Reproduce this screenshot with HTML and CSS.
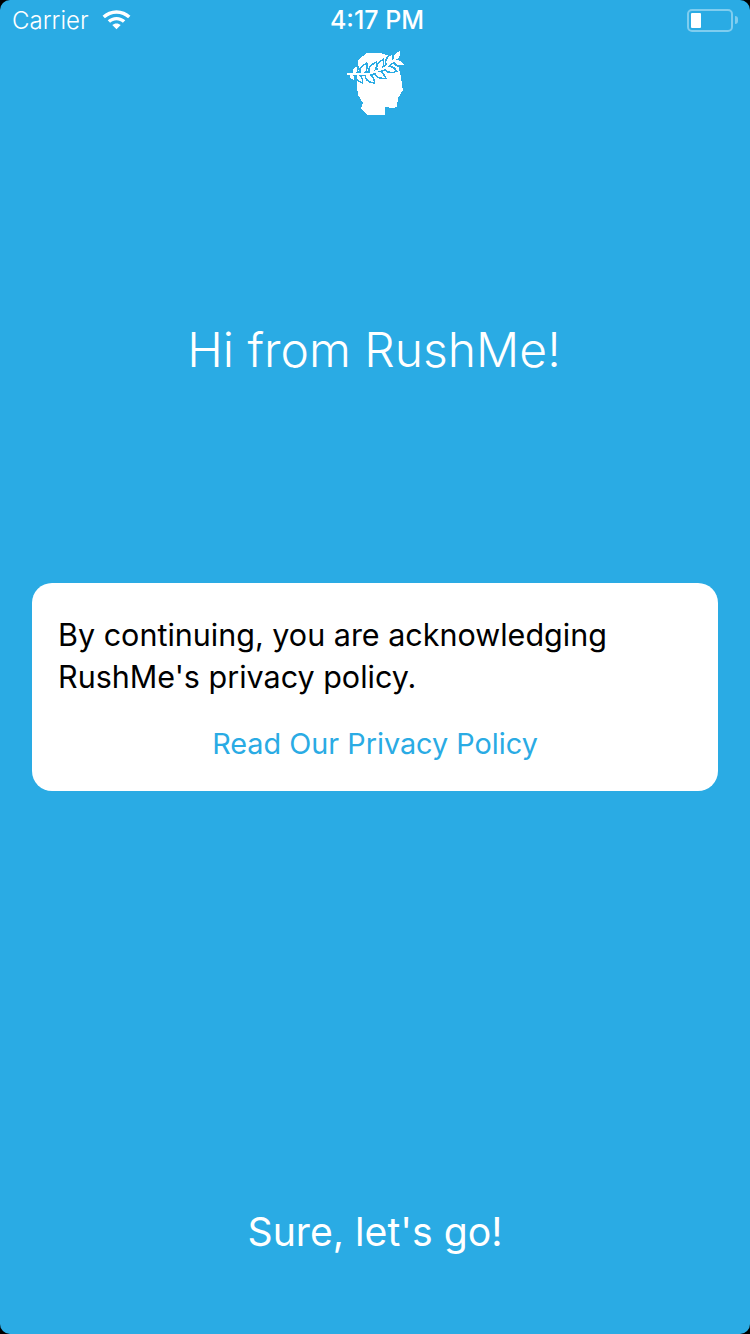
FILE: index.html
```html
<!DOCTYPE html>
<html lang="en">
<head>
  <meta charset="UTF-8" />
  <meta name="viewport" content="width=device-width, initial-scale=1.0" />
  <title>RushMe</title>
  <link rel="stylesheet" href="styles.css">
</head>
<body>
  <div class="status-bar">
    <div class="status-left">
      <span>Carrier</span>
      <svg class="wifi" width="31" height="23" viewBox="0 0 30 22">
        <path d="M15 3C9.600 3 5 5 1.500 8.300l2.300 2.400C6.800 8 10.700 6.300 15 6.300s8.200 1.700 11.200 4.400l2.300-2.400C25 5 20.400 3 15 3z" fill="#fff"/>
        <path d="M15 9.500c-3.300 0-6.200 1.200-8.500 3.300l2.300 2.400c1.700-1.500 3.800-2.400 6.200-2.400s4.500.9 6.200 2.400l2.300-2.400c-2.300-2.100-5.200-3.300-8.500-3.300z" fill="#fff"/>
        <path d="M15 15.800c-1.600 0-3 .6-4.100 1.500L15 21.500l4.100-4.200c-1.100-.9-2.500-1.500-4.100-1.500z" fill="#fff"/>
      </svg>
    </div>
    <div class="status-time">4:17 PM</div>
    <div class="status-right">
      <div class="battery"><div class="battery-level"></div></div>
      <div class="battery-cap"></div>
    </div>
  </div>

  <div class="logo">
    <svg width="64" height="72" viewBox="0 0 64 72" shape-rendering="crispEdges">
      <defs>
        <path id="leaf" d="M0 0C3-3.500 7-3 11 0C7 3 3 3.500 0 0Z"/>
        <g id="laurel">
          <path d="M3 25L26 24.500L40 19L51 10L52 11.500L41 21L26 26.500L3 27Z"/>
          <use href="#leaf" transform="translate(9 26) rotate(-60) scale(.8)"/>
          <use href="#leaf" transform="translate(17 26) rotate(-62)"/>
          <use href="#leaf" transform="translate(26 25) rotate(-60)"/>
          <use href="#leaf" transform="translate(34 22.500) rotate(-65)"/>
          <use href="#leaf" transform="translate(43 17) rotate(-65)"/>
          <use href="#leaf" transform="translate(6 26) rotate(55) scale(.7)"/>
          <use href="#leaf" transform="translate(13 27) rotate(55) scale(.8)"/>
          <use href="#leaf" transform="translate(22 26.500) rotate(45)"/>
          <use href="#leaf" transform="translate(31 24) rotate(30)"/>
          <use href="#leaf" transform="translate(41 20) rotate(15)"/>
          <use href="#leaf" transform="translate(50 13) rotate(20)"/>
          <use href="#leaf" transform="translate(50 12) rotate(-55)"/>
        </g>
      </defs>
      <path class="head" d="M14 12 L23 5 L36 5 L48 9 L54 17 L57 29 L58 37 L59 42 L54 50 L53 59 L48 60 L41 59 L41 67 L23 67 L17 61 L19 55 L14 47 L13 39 Z"/>
      <use href="#laurel" class="laurel-gap"/>
      <use href="#laurel" class="laurel"/>
    </svg>
  </div>

  <h1 class="greeting">Hi from RushMe!</h1>

  <div class="card">
    <p class="card-text">By continuing, you are acknowledging RushMe's privacy policy.</p>
    <a class="card-link" href="#">Read Our Privacy Policy</a>
  </div>

  <button class="go-btn">Sure, let's go!</button>
</body>
</html>
```

FILE: styles.css
```css
*, *::before, *::after { box-sizing: border-box; }

html { background-color: #000; }

body {
  margin: 0;
  height: 1334px;
  overflow: hidden;
  background-color: #2aabe4;
  border-radius: 10px;
  color: #fff;
  font-family: Inter, 'Liberation Sans', sans-serif;
  display: flex;
  flex-direction: column;
  align-items: center;
}

.status-bar {
  width: 100%;
  height: 40px;
  padding: 0 12px;
  display: flex;
  align-items: center;
  justify-content: space-between;
}

.status-left {
  flex: 1;
  display: flex;
  align-items: center;
  gap: 12px;
  font-size: 24px;
  font-weight: 300;
}

.wifi { margin-top: -4px; }

.status-time {
  margin-left: 4px;
  font-size: 25px;
  font-weight: 500;
}

.status-right {
  flex: 1;
  display: flex;
  align-items: center;
  justify-content: flex-end;
}

.battery {
  width: 46px;
  height: 23px;
  border: 2px solid #7fcdef;
  border-radius: 5px;
  padding: 2px;
}

.battery-level {
  width: 10px;
  height: 100%;
  background-color: #fff;
  border-radius: 1px;
}

.battery-cap {
  width: 3px;
  height: 8px;
  margin-left: 2px;
  background-color: #7fcdef;
  border-radius: 0 3px 3px 0;
}

.logo {
  height: 72px;
  margin-top: 8px;
  margin-left: 2px;
}

.logo svg { display: block; }

.head { fill: #fff; }

.laurel-gap {
  fill: #2aabe4;
  stroke: #2aabe4;
  stroke-width: 3;
}

.laurel { fill: #fff; }

.greeting {
  margin: 202px 0 0;
  padding-right: 2px;
  font-size: 48px;
  line-height: 56px;
  font-weight: 300;
}

.card {
  width: 686px;
  height: 208px;
  margin-top: 205px;
  padding: 31px 26px 0 27px;
  background-color: #fff;
  border-radius: 20px;
  display: flex;
  flex-direction: column;
}

.card-text {
  margin: 0 0 0 -1px;
  color: #000;
  font-size: 30.500px;
  line-height: 42px;
}

.card-link {
  margin-top: 25px;
  padding-right: 1px;
  color: #2aabe4;
  font-size: 28.800px;
  line-height: 42px;
  text-align: center;
  text-decoration: none;
}

.go-btn {
  margin-top: 411px;
  padding: 0;
  border: none;
  background: none;
  color: #fff;
  font-family: inherit;
  font-size: 39.200px;
  line-height: 60px;
  font-weight: 400;
}
```
